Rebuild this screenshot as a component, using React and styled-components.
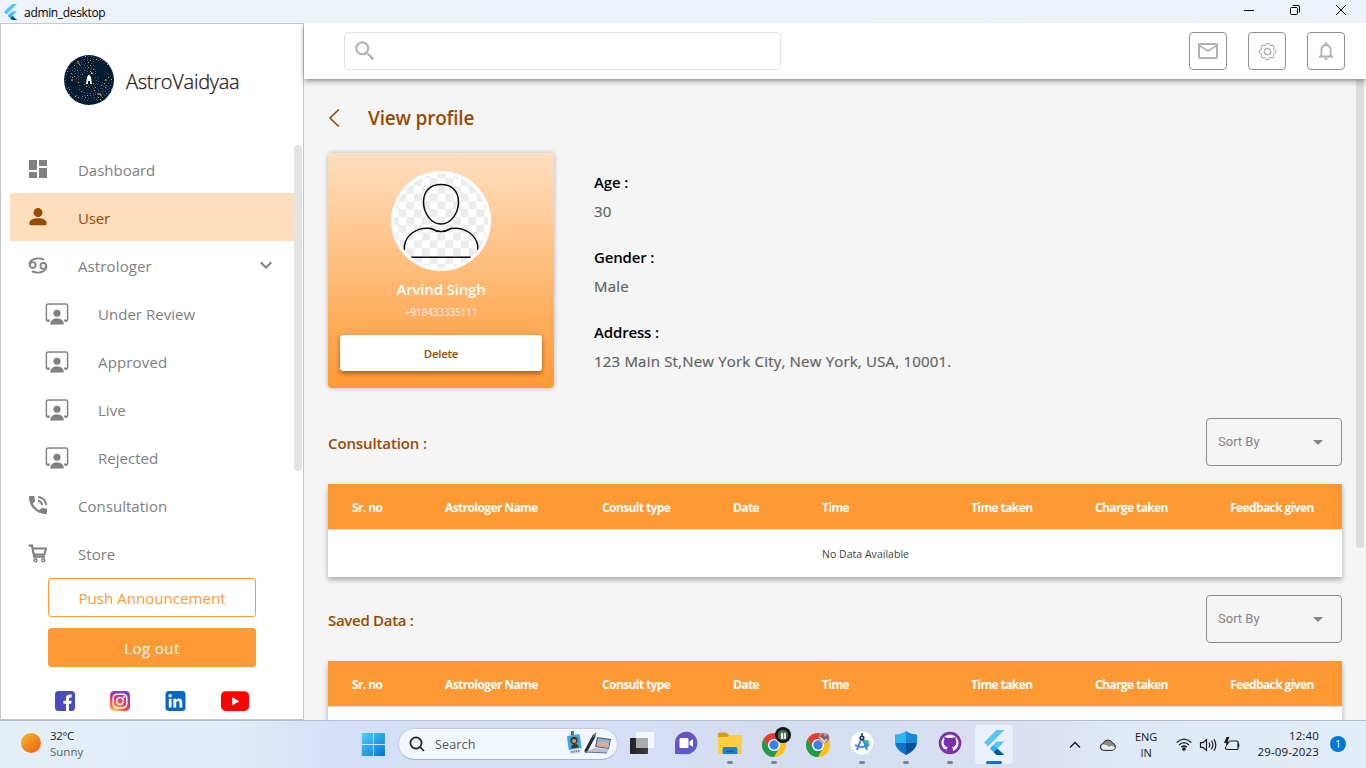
import React from "react";
import styled, { createGlobalStyle, css } from "styled-components";
import {
  MdDashboard,
  MdPhoneInTalk,
  MdMailOutline,
  MdNotificationsNone,
  MdSearch,
  MdKeyboardArrowDown,
  MdArrowDropDown,
} from "react-icons/md";

const GlobalStyle = createGlobalStyle`
  * { box-sizing: border-box; }
  body {
    margin: 0;
    overflow: hidden;
    font-family: "Open Sans", "Noto Sans", sans-serif;
    color: #000;
  }
  svg { display: block; flex: none; }
  button { font-family: inherit; padding: 0; margin: 0; }
`;

const brown = "#964b00";
const orange = "#ff9933";
const grey = "#808080";

const Desktop = styled.div`
  width: 1366px;
  height: 768px;
  display: flex;
  flex-direction: column;
  overflow: hidden;
`;

/* ---------- window ---------- */
const TitleBar = styled.header`
  height: 23px;
  flex: none;
  display: flex;
  align-items: center;
  padding-left: 4px;
  background: linear-gradient(90deg, #eef3fa, #edf3fa 60%, #eef2fb);
`;
const TitleText = styled.span`
  font-size: 12px;
  letter-spacing: -0.35px;
  margin-left: 7px;
  padding-top: 1px;
  flex: 1;
`;
const WindowControls = styled.div`
  display: flex;
  align-items: center;
  gap: 34px;
  padding: 0 19px 3px 0;
`;
const WindowBody = styled.div`
  height: 697px;
  flex: none;
  display: flex;
  overflow: hidden;
`;

/* ---------- sidebar ---------- */
const Sidebar = styled.aside`
  width: 304px;
  flex: none;
  border: 1px solid #c8c8c8;
  background: #fff;
  display: flex;
  flex-direction: column;
`;
const Brand = styled.div`
  height: 121px;
  flex: none;
  display: flex;
  align-items: flex-start;
  padding: 31px 0 0 63px;
`;
const BrandName = styled.div`
  font-size: 20px;
  font-weight: 300;
  line-height: 28px;
  letter-spacing: -0.25px;
  color: #1d1022;
  margin: 13px 0 0 12px;
  -webkit-text-stroke: 0.25px #1d1022;
`;
const MenuArea = styled.div`
  height: 433px;
  flex: none;
  display: flex;
  padding-left: 9px;
`;
const Menu = styled.nav`
  width: 284px;
`;
const SideThumb = styled.div`
  width: 8px;
  height: 326px;
  border-radius: 4px;
  background: #e4e4e4;
`;
const Item = styled.div`
  height: 48px;
  display: flex;
  align-items: center;
  padding-left: ${(p) => (p.$sub ? 34 : 15)}px;
  padding-right: 16px;
  background: ${(p) => (p.$active ? "#ffdebd" : "transparent")};
  color: ${(p) => (p.$active ? brown : grey)};
`;
const ItemIcon = styled.span`
  width: 26px;
  height: 26px;
  display: flex;
  align-items: center;
  justify-content: center;
  margin-right: ${(p) => (p.$sub ? 1 : 0)}px;
`;
const ItemLabel = styled.span`
  flex: 1;
  font-size: 15px;
  letter-spacing: ${(p) => p.$ls ?? 0.03}px;
  margin-left: 27px;
  padding-top: 1px;
`;
const SideButton = styled.button`
  height: 39px;
  width: 208px;
  margin: 0 0 11px 47px;
  border: 1px solid ${orange};
  border-radius: 3px;
  background: ${(p) => (p.$filled ? orange : "#fff")};
  color: ${(p) => (p.$filled ? "#fff" : orange)};
  font-size: 15px;
  letter-spacing: ${(p) => (p.$filled ? 0.4 : 0.05)}px;
  padding-top: 1px;
`;
const Social = styled.div`
  display: flex;
  align-items: center;
  padding: 12px 0 0 53px;
  gap: 33px;
`;

/* ---------- main ---------- */
const Main = styled.main`
  flex: 1;
  min-width: 0;
  display: flex;
  flex-direction: column;
  background: #f5f5f5;
`;
const TopBar = styled.div`
  height: 56px;
  flex: none;
  display: flex;
  align-items: center;
  padding: 0 21px 0 40px;
  background: #fff;
  box-shadow: 0 2px 4px -1px rgba(0, 0, 0, 0.3), 0 3px 6px rgba(0, 0, 0, 0.22);
  z-index: 1;
`;
const SearchBox = styled.div`
  width: 437px;
  height: 38px;
  border: 1px solid #e2e2e2;
  border-radius: 4px;
  display: flex;
  align-items: center;
  padding-left: 7px;
  color: #b3b3b3;
`;
const TopActions = styled.div`
  margin-left: auto;
  display: flex;
  gap: 21px;
`;
const IconButton = styled.button`
  width: 38px;
  height: 38px;
  border: 1px solid #8f8f8f;
  border-radius: 4px;
  background: #fff;
  color: #b0b0b0;
  display: flex;
  align-items: center;
  justify-content: center;
`;
const Scroller = styled.div`
  flex: 1;
  min-height: 0;
  display: flex;
  overflow: hidden;
`;
const Content = styled.div`
  width: 1038px;
  margin-right: 14px;
  padding: 24px 0 0 24px;
`;
const MainThumb = styled.div`
  width: 8px;
  height: 469px;
  border-radius: 4px;
  background: #dcdcdc;
`;
const PageHead = styled.div`
  display: flex;
  align-items: center;
  height: 30px;
  margin-bottom: 20px;
`;
const PageTitle = styled.h1`
  margin: 0 0 0 27px;
  font-size: 19px;
  font-weight: 600;
  letter-spacing: -0.2px;
  color: ${brown};
`;
const ProfileRow = styled.section`
  display: flex;
  height: 235px;
`;
const ProfileCard = styled.div`
  width: 226px;
  height: 235px;
  border-radius: 4px;
  background: linear-gradient(#ffdfc0, ${orange});
  box-shadow: 0 0 5px rgba(0, 0, 0, 0.28);
  display: flex;
  flex-direction: column;
  align-items: center;
  padding-top: 18px;
`;
const PersonName = styled.div`
  height: 22px;
  line-height: 22px;
  margin-top: 7px;
  font-size: 15px;
  font-weight: 600;
  letter-spacing: -0.18px;
  color: #fff;
`;
const Phone = styled.div`
  height: 16px;
  line-height: 16px;
  margin-top: 4px;
  font-size: 10.5px;
  font-weight: 600;
  letter-spacing: -0.42px;
  color: #eadfd5;
`;
const DeleteButton = styled.button`
  width: 202px;
  height: 36px;
  margin-top: 15px;
  border: 0;
  border-radius: 3px;
  background: #fff;
  color: ${brown};
  font-size: 11.5px;
  font-weight: 600;
  letter-spacing: -0.3px;
  box-shadow: 0 3px 4px rgba(90, 50, 10, 0.42), 0 1px 5px rgba(90, 50, 10, 0.2);
`;
const Facts = styled.dl`
  margin: 15px 0 0 40px;
  font-size: 15px;
`;
const FactName = styled.dt`
  height: 28px;
  line-height: 28px;
  font-weight: 600;
  letter-spacing: -0.15px;
`;
const FactValue = styled.dd`
  margin: 0 0 17px;
  height: 30px;
  line-height: 30px;
  letter-spacing: 0.2px;
  color: #5f5f5f;
  -webkit-text-stroke: 0.2px #5f5f5f;
`;
const SectionHead = styled.div`
  display: flex;
  align-items: center;
  justify-content: space-between;
  height: 48px;
  margin-top: ${(p) => p.$top}px;
  margin-bottom: 18px;
`;
const SectionTitle = styled.h2`
  margin: 0;
  padding-top: 2px;
  font-size: 15px;
  font-weight: 600;
  letter-spacing: ${(p) => p.$ls}px;
  color: ${brown};
`;
const SortSelect = styled.div`
  width: 136px;
  height: 48px;
  border: 1px solid #8c8c8c;
  border-radius: 4px;
  display: flex;
  align-items: center;
  justify-content: space-between;
  padding: 0 11px;
  font-family: Roboto, sans-serif;
  font-size: 13px;
  color: #858585;
`;
const SortLabel = styled.span`
  padding-bottom: 1px;
`;
const Table = styled.div`
  height: 93px;
  background: #fff;
  box-shadow: 0 3px 5px rgba(0, 0, 0, 0.3);
`;
const HeadRow = styled.div`
  height: 46px;
  background: ${orange};
  border-bottom: 1px solid #e4dcd4;
  display: grid;
  grid-template-columns: 93px 157px 131px 89px 149px 124px 135px 1fr;
  align-items: center;
  padding-left: 24px;
  padding-top: 2px;
`;
const HeadCell = styled.span`
  color: #fff;
  font-size: 12px;
  font-weight: 700;
  letter-spacing: -0.6px;
  white-space: nowrap;
`;
const EmptyRow = styled.div`
  height: 47px;
  line-height: 48px;
  padding-left: 494px;
  font-size: 10.5px;
  letter-spacing: 0.03px;
  color: #404040;
`;

/* ---------- taskbar ---------- */
const Taskbar = styled.footer`
  height: 48px;
  flex: none;
  display: flex;
  align-items: center;
  border-top: 1px solid #b5bdcd;
  background: linear-gradient(90deg, #e3eef7 0, #e2edf8 230px, #d4e0f8 340px, #d5dff6 620px, #d5dcef 760px, #d6dff2 900px, #dddff2 1040px, #dfe9f7 1110px, #e1edf8 100%);
`;
const Weather = styled.div`
  width: 352px;
  display: flex;
  align-items: center;
  padding: 0 0 2px 21px;
`;
const Sun = styled.span`
  width: 20px;
  height: 20px;
  border-radius: 50%;
  background: linear-gradient(140deg, #efb52c 10%, #f0680c 85%);
  margin-top: -1px;
`;
const WeatherText = styled.div`
  margin-left: 9px;
  font-size: 11.5px;
  line-height: 16px;
  letter-spacing: -0.35px;
  color: #1c1c1c;
`;
const WeatherNote = styled.div`
  color: #5b6168;
  letter-spacing: 0;
`;
const StartSlot = styled.div`
  width: 46px;
  padding: 0 0 1px 9px;
`;
const TaskSearch = styled.div`
  width: 220px;
  height: 32px;
  border-radius: 16px;
  border: 1px solid #c3cde0;
  border-bottom-color: #a9b3c8;
  background: #f2f6fd;
  display: flex;
  align-items: center;
  padding: 0 5px 0 10px;
  margin-bottom: 1px;
`;
const TaskSearchText = styled.span`
  flex: 1;
  margin-left: 10px;
  font-size: 12.5px;
  letter-spacing: 0.15px;
  color: #52565c;
`;
const Apps = styled.div`
  display: flex;
  margin-left: 5px;
`;
const AppSlot = styled.div`
  width: 38px;
  height: 39px;
  margin-right: 6px;
  border-radius: 4px;
  display: flex;
  flex-direction: column;
  align-items: center;
  justify-content: space-between;
  padding-top: 5px;
  ${(p) => p.$active && css`
    background: #ebf1fb;
    box-shadow: 0 0 0 0.5px #d9e0ee;
  `}
`;
const Indicator = styled.span`
  width: ${(p) => (p.$active ? 16 : 6)}px;
  height: 3px;
  border-radius: 2px;
  background: ${(p) => (p.$active ? "#0a74d4" : p.$on ? "#80848c" : "transparent")};
`;
const Tray = styled.div`
  margin-left: auto;
  display: flex;
  align-items: center;
  padding-right: 20px;
  font-size: 11.5px;
  line-height: 16px;
  color: #151515;
`;
const TrayArrow = styled.span`
  margin-right: 18px;
`;
const Language = styled.div`
  width: 26px;
  text-align: center;
  margin: 0 17px 0 16px;
  font-size: 11px;
  letter-spacing: -0.1px;
`;
const Clock = styled.div`
  width: 66px;
  text-align: right;
  margin: -1px 11px 0 13px;
  letter-spacing: 0.15px;
  white-space: nowrap;
`;
const Badge = styled.span`
  width: 16px;
  height: 16px;
  border-radius: 50%;
  background: #0078d7;
  color: #fff;
  font-size: 10px;
  text-align: center;
  margin-bottom: 1px;
`;

/* ---------- drawings ---------- */
const FlutterMark = ({ size }) => (
  <svg width={size * 0.82} height={size} viewBox="0 0 82 100">
    <path d="M50 0H81L16 65L0 50Z" fill="#54c5f8" />
    <path d="M50 46H81L53 74L81 100H50L24 74Z" fill="#54c5f8" />
    <path d="M39 88L53 74L81 100H50Z" fill="#01579b" />
    <path d="M24 74L38 60L53 74L39 88Z" fill="#29b6f6" />
  </svg>
);

const dots = [];
for (let r = 5; r <= 24; r += 2.1) {
  const n = Math.round(r * 2.1);
  for (let i = 0; i < n; i++) {
    const a = (i / n) * Math.PI * 2 + r * 0.7;
    const seed = (i * 37 + Math.round(r * 10) * 13) % 17;
    if (seed % 3 === 1) continue;
    dots.push({
      x: 25 + Math.cos(a) * r,
      y: 25 + Math.sin(a) * r,
      c: seed === 5 || seed === 12 ? "#f09a3a" : seed % 2 ? "#4a6880" : "#2a4d68",
    });
  }
}
const BrandLogo = () => (
  <svg width="50" height="50" viewBox="0 0 50 50">
    <circle cx="25" cy="25" r="25" fill="#041c30" />
    {dots.map((d, i) => (
      <rect key={i} x={Math.round(d.x)} y={Math.round(d.y)} width="1" height="1" fill={d.c} />
    ))}
    <path d="M7 25h2M13 6l3 4M26 16l3 3M42 24v2M33 39h4v2" stroke="#ff9f3a" fill="none" />
    <path d="M22 29L23 22L25 19.5L27 22L28 29H26V26H24V29Z" fill="#fff" />
  </svg>
);

const PersonIcon = () => (
  <svg width="18" height="18" viewBox="0 0 18 18" fill="currentColor">
    <circle cx="9" cy="4.6" r="4.5" />
    <path d="M.4 15.2C.4 12.2 4.2 10.3 9 10.3S17.6 12.2 17.6 15.2V16Q17.6 17.2 16.4 17.2H1.6Q.4 17.2 .4 16Z" />
  </svg>
);

const CancerIcon = () => (
  <svg width="20" height="17" viewBox="0 0 20 17" fill="none" stroke="currentColor" strokeWidth="1.8">
    <circle cx="4.7" cy="8.1" r="2.9" />
    <circle cx="15.3" cy="8.9" r="2.9" />
    <path d="M1.4 7.7C1.6 2.6 8.5 -.3 16 2.6" />
    <path d="M18.6 9.3C18.4 14.4 11.5 17.3 4 14.4" />
  </svg>
);

const WorkspaceIcon = () => (
  <svg width="24" height="24" viewBox="0 -2 24 24">
    <path d="M4.3 18H3Q1.4 18 1.4 16.4V2.6Q1.4 1 3 1H21Q22.6 1 22.6 2.6V16.4Q22.6 18 21 18H19.7" fill="none" stroke="currentColor" strokeWidth="1.4" />
    <path d="M1.5 16.5H5L4 19H2.5ZM22.5 16.5H19L20 19H21.5Z" fill="currentColor" />
    <circle cx="12" cy="10.2" r="3.5" fill="currentColor" />
    <path d="M5.2 21.4C5.4 17.5 8 15.6 12 15.6S18.6 17.5 18.8 21.4Z" fill="currentColor" />
  </svg>
);

const CartIcon = () => (
  <svg width="20" height="19" viewBox="0 0 20 19" fill="none" stroke="currentColor">
    <path d="M.5 1.7H4L6.2 12.6H17" strokeWidth="2.2" />
    <path d="M4.8 4.6H18L16.3 10.6H6" strokeWidth="2" />
    <circle cx="7.5" cy="16.2" r="1.5" strokeWidth="1.4" />
    <circle cx="15.3" cy="16.2" r="1.5" strokeWidth="1.4" />
  </svg>
);

const gearPath = (() => {
  const pts = [];
  for (let i = 0; i <= 96; i++) {
    const a = (i / 96) * Math.PI * 2;
    const r = 7.4 + Math.max(-0.75, Math.min(0.8, 1.3 * Math.cos(8 * a)));
    pts.push(`${(9.5 + r * Math.sin(a)).toFixed(2)} ${(9.5 - r * Math.cos(a)).toFixed(2)}`);
  }
  return `M${pts.join("L")}Z`;
})();
const GearIcon = () => (
  <svg width="19" height="19" viewBox="0 0 19 19" fill="none" stroke="currentColor" strokeWidth="1.1" strokeLinejoin="round">
    <path d={gearPath} />
    <circle cx="9.5" cy="9.5" r="3.2" strokeWidth="1.3" />
  </svg>
);

const BackIcon = () => (
  <svg width="13" height="20" viewBox="0 0 13 20" fill="none" stroke={brown} strokeWidth="1.6">
    <path d="M10.8 1.5L2 10L10.8 18.5" />
  </svg>
);

const Avatar = () => (
  <svg width="100" height="100" viewBox="0 0 100 100">
    <defs>
      <pattern id="checks" width="15.6" height="15.6" patternUnits="userSpaceOnUse" x="7.5" y="7">
        <rect width="15.6" height="15.6" fill="#fff" />
        <rect width="7.8" height="7.8" fill="#ececec" />
        <rect x="7.8" y="7.8" width="7.8" height="7.8" fill="#ececec" />
      </pattern>
      <clipPath id="round"><circle cx="50" cy="50" r="47" /></clipPath>
    </defs>
    <circle cx="50" cy="50" r="50" fill="#fff" />
    <g clipPath="url(#round)">
      <rect width="100" height="100" fill="url(#checks)" />
      <g fill="none" stroke="#0c0c0c" strokeWidth="1.5">
        <path d="M50 13.6C61 13.6 67.5 20 67.5 31C67.5 42 60 53 50 53S32.5 42 32.5 31C32.5 20 39 13.6 50 13.6Z" />
        <path d="M13.4 79V75C14.5 65 25 55.5 40 57.5Q50 63.5 60 57.5C75 55.5 85.5 65 86.8 75V79" />
        <path d="M20 86.3H80" />
      </g>
    </g>
  </svg>
);

const FacebookIcon = () => (
  <svg width="22" height="22" viewBox="0 0 22 22">
    <rect x="1" y="1" width="20" height="20" rx="3.5" fill="#4b4dbd" />
    <path d="M12 21V13.8H9.4V10.7H12V8.6C12 5.8 13.6 4.6 15.8 4.6H17.7V7.4H16.4C15.3 7.4 15 8 15 8.9V10.7H17.6L17.2 13.8H15V21Z" fill="#fff" />
  </svg>
);
const InstagramIcon = () => (
  <svg width="22" height="22" viewBox="0 0 22 22">
    <defs>
      <radialGradient id="ig" cx=".25" cy="1" r="1.1">
        <stop offset="0" stopColor="#ffd65a" />
        <stop offset=".35" stopColor="#fb6a3a" />
        <stop offset=".65" stopColor="#d6307e" />
        <stop offset="1" stopColor="#7040cf" />
      </radialGradient>
    </defs>
    <rect x="1" y="1" width="20" height="20" rx="4.5" fill="url(#ig)" />
    <rect x="4.2" y="4.2" width="13.6" height="13.6" rx="4" fill="none" stroke="#fff" strokeWidth="1.5" />
    <circle cx="11" cy="11" r="3.4" fill="none" stroke="#fff" strokeWidth="1.5" />
    <circle cx="15" cy="7" r="1" fill="#fff" />
  </svg>
);
const LinkedInIcon = () => (
  <svg width="23" height="22" viewBox="-.5 0 23 22">
    <rect x="1" y="1" width="20" height="20" rx="3.5" fill="#0a66c2" />
    <circle cx="5.7" cy="5.7" r="1.7" fill="#fff" />
    <path d="M4.3 8.7H7.1V17.6H4.3ZM8.9 8.7H11.5V10C12 9 13 8.4 14.4 8.4C17 8.4 17.8 10 17.8 12.6V17.6H15V13.1C15 11.8 14.8 10.9 13.6 10.9C12.2 10.9 11.7 11.8 11.7 13.1V17.6H8.9Z" fill="#fff" />
  </svg>
);
const YouTubeIcon = () => (
  <svg width="30" height="22" viewBox="0 0 30 22">
    <rect x="1" y="1.3" width="28" height="19.6" rx="4.5" fill="#f00" />
    <path d="M12.2 7V15.4L19.3 11.2Z" fill="#fff" />
  </svg>
);

const StartIcon = () => (
  <svg width="24" height="24" viewBox="0 0 24 24">
    <defs>
      <linearGradient id="win" x1="0" y1="0" x2="1" y2="1">
        <stop offset="0" stopColor="#4fd0fb" />
        <stop offset="1" stopColor="#0373d1" />
      </linearGradient>
    </defs>
    <path d="M.8 1H11.9V12H.8ZM12.8 1H23.9V12H12.8ZM.8 13H11.9V24H.8ZM12.8 13H23.9V24H12.8Z" fill="url(#win)" />
  </svg>
);
const SearchGlass = () => (
  <svg width="16" height="16" viewBox="0 0 16 16" fill="none" stroke="#222" strokeWidth="1.7">
    <circle cx="7" cy="7" r="5.6" />
    <path d="M11 11L15 15" />
  </svg>
);
const SearchArt = () => (
  <svg width="46" height="26" viewBox="0 0 46 26">
    <path d="M5 0H8V5H5Z" fill="#56707f" />
    <g transform="rotate(-8 8 13)">
      <rect x="2" y="4" width="13" height="15" rx="1.5" fill="#36a9e2" />
      <rect x="2" y="18" width="13" height="5" rx="1" fill="#dfe3ea" />
      <path d="M4 20.5H13" stroke="#777f8c" strokeWidth="2" strokeDasharray="1.5 .8" />
      <circle cx="8.5" cy="9.5" r="3.6" fill="#49301f" />
      <circle cx="8.5" cy="10" r="2" fill="#d69d76" />
      <path d="M4.5 17Q5 13 8.5 13T12.5 17Z" fill="#493323" />
    </g>
    <path d="M20 20L28 5" stroke="#252b33" strokeWidth="3.2" strokeLinecap="round" />
    <path d="M27 6L30 2" stroke="#6b7480" strokeWidth="1.6" />
    <path d="M31 6L45 8L43 18L29 16Z" fill="#596273" />
    <path d="M32 7.2L43.8 8.9L42.3 16.7L30.5 15Z" fill="#8cb6dc" />
    <path d="M31.3 11Q36 9 42.9 13L42.3 16.7L30.5 15Z" fill="#dfab96" />
    <path d="M29 17L43 18L41 22L19 21Z" fill="#bcc2cf" />
    <path d="M19 21L41 22" stroke="#697184" />
  </svg>
);
const TaskViewIcon = () => (
  <svg width="26" height="26" viewBox="0 0 26 26">
    <defs>
      <linearGradient id="tv"><stop stopColor="#222" /><stop offset="1" stopColor="#3c3c3c" /></linearGradient>
    </defs>
    <rect x="1" y="8" width="18" height="16" rx="1" fill="url(#tv)" />
    <rect x="7" y="2" width="18" height="16" rx="1" fill="#f5f6f8" />
    <path d="M7 8H19V18H7Z" fill="#a9abae" />
  </svg>
);
const ChatIcon = () => (
  <svg width="26" height="26" viewBox="0 0 26 26">
    <defs>
      <linearGradient id="chat" x1="0" y1="0" x2="1" y2="1">
        <stop offset="0" stopColor="#7b4bb4" />
        <stop offset="1" stopColor="#4f61d0" />
      </linearGradient>
    </defs>
    <path d="M2 24V12A11.2 11.2 0 1 1 13 24.2Z" fill="url(#chat)" />
    <rect x="6.5" y="8" width="9" height="10" rx="1.5" fill="#fff" />
    <path d="M16.5 11.5L20 9V17L16.5 14.5Z" fill="#fff" />
  </svg>
);
const FolderIcon = () => (
  <svg width="26" height="26" viewBox="0 0 26 26">
    <path d="M1 4Q1 2.5 2.5 2.5H9L12 5H24Q25 5 25 6V12H1Z" fill="#d99a14" />
    <path d="M1 7H10L12 5H24Q25 5 25 6V23Q25 24 24 24H2Q1 24 1 23Z" fill="#fcce46" />
    <path d="M5.5 24V19Q5.5 17 7.5 17H18.5Q20.5 17 20.5 19V24Z" fill="#1685d2" />
    <path d="M9 21.5H17" stroke="#0b5da8" strokeWidth="1.5" />
  </svg>
);
const ChromeIcon = ({ photo }) => (
  <svg width="32" height="30" viewBox="0 0 32 30" overflow="visible">
    <g transform="translate(0 2)">
      <circle cx="16" cy="13" r="12" fill="#fbc116" />
      <path d="M5.6 7A12 12 0 0 1 26.4 7H16A6 6 0 0 0 10.8 16Z" fill="#e33b2e" />
      <path d="M5.6 7A12 12 0 0 0 16 25L21.2 16A6 6 0 0 1 10.8 16Z" fill="#229a4c" />
      <circle cx="16" cy="13" r="6" fill="#fff" />
      <circle cx="16" cy="13" r="4.7" fill="#3b80ee" />
    </g>
    {photo ? (
      <g>
        <circle cx="22" cy="8" r="5.5" fill="#c79a94" />
        <path d="M18 6L21 3L23 7L26 4L27 9L24 12Z" fill="#7b6172" />
        <path d="M19 8L22 12L25 9" stroke="#edd6cc" strokeWidth="1.5" fill="none" />
      </g>
    ) : (
      <g>
        <circle cx="25" cy="5" r="8" fill="#101515" />
        <circle cx="25" cy="5" r="5.3" fill="#43644c" />
        <path d="M22.8 9V4L24 1.8L25 4V9ZM25.7 9V4L27 2L28 4V9Z" fill="#e8ece9" />
      </g>
    )}
  </svg>
);
const StudioIcon = () => (
  <svg width="26" height="26" viewBox="0 0 26 26">
    <circle cx="13" cy="13" r="11.5" fill="#fff" />
    <path d="M15 10L19 10Q22 14 19 17H16Z" fill="#34c77b" />
    <path d="M13 7L8 20M13 7L18 20M6 15Q13 19 20 15" stroke="#3b7ded" strokeWidth="2" fill="none" />
    <circle cx="13" cy="8" r="2.6" fill="#1d3650" />
    <circle cx="13" cy="8" r="1" fill="#d4e4fb" />
    <path d="M13 3V6" stroke="#1d3650" strokeWidth="1.5" />
  </svg>
);
const ShieldIcon = () => (
  <svg width="26" height="26" viewBox="0 0 26 26">
    <path d="M13 1Q18 4.5 24 4.5V12Q24 20 13 25V1Z" fill="#1686d9" />
    <path d="M13 1Q8 4.5 2 4.5V12Q2 20 13 25V1Z" fill="#2fb4ec" />
    <path d="M2.2 13H13V25Q3.5 20 2.2 13Z" fill="#1272c8" />
    <path d="M23.8 13H13V25Q22.5 20 23.8 13Z" fill="#09509b" />
  </svg>
);
const GithubIcon = () => (
  <svg width="26" height="26" viewBox="0 0 26 26">
    <circle cx="13" cy="13" r="11.3" fill="#7a30ac" />
    <circle cx="13" cy="13" r="8.6" fill="#fff" />
    <path d="M7.4 7Q9 7 10.4 8Q13 7.3 15.6 8Q17 7 18.6 7Q19 8.5 18.6 9.8Q19.8 11.3 19.3 13.5Q18.6 16.7 15 17Q16 18 16 20V22H10V20.3Q7.5 20.8 6.6 18.5Q8.7 20 10.1 18.5Q10.2 17.5 11 17Q7.4 16.7 6.7 13.5Q6.2 11.3 7.4 9.8Q7 8.5 7.4 7Z" fill="#7a30ac" />
  </svg>
);
const CloudIcon = () => (
  <svg width="18" height="14" viewBox="0 0 18 14">
    <path d="M4.5 12.4A3.5 3.5 0 0 1 4 5.5A5.2 5.2 0 0 1 13.6 5A3.8 3.8 0 0 1 13.4 12.4Z" fill="#888" stroke="#2b2b2b" />
    <path d="M5 11.8A3 3 0 0 1 3.5 6.5Q8 6 10 9Q13 6.5 16 9.5Q15.5 11.8 13.4 11.8Z" fill="#eceff3" />
  </svg>
);
const StatusIcons = () => (
  <svg width="64" height="18" viewBox="0 0 64 18" fill="none" stroke="#1a1a1a" strokeWidth="1.2">
    <path d="M.6 6.5Q8 -.3 15.4 6.5M3 9Q8 4.2 13 9M5.2 11.3Q8 8.7 10.8 11.3" />
    <circle cx="8" cy="13" r="1.2" fill="#1a1a1a" />
    <path d="M24.5 6.7H27L30.5 3.5V14.5L27 11.3H24.5ZM33 6.5Q34.6 9 33 11.5M35.5 4.8Q38.2 9 35.5 13.2M38 3.2Q41.6 9 38 14.8" />
    <path d="M53.5 5H61Q62 5 62 6V12.5Q62 13.5 61 13.5H51Q49.5 13.5 49.5 12V11M62.7 7.5V11" />
    <path d="M50.5 1L48 7H50.5L49.5 11.5L54 5.5H51.5L53.5 1Z" fill="#1a1a1a" stroke="none" />
  </svg>
);

const menuItems = [
  { label: "Dashboard", icon: <MdDashboard size={24} />, ls: -0.02 },
  { label: "User", icon: <PersonIcon />, active: true, ls: -0.2 },
  { label: "Astrologer", icon: <CancerIcon />, open: true, ls: 0.12 },
  { label: "Under Review", icon: <WorkspaceIcon />, sub: true },
  { label: "Approved", icon: <WorkspaceIcon />, sub: true, ls: 0.15 },
  { label: "Live", icon: <WorkspaceIcon />, sub: true },
  { label: "Rejected", icon: <WorkspaceIcon />, sub: true },
  { label: "Consultation", icon: <MdPhoneInTalk size={24} /> },
  { label: "Store", icon: <CartIcon /> },
];

const facts = [
  { name: "Age :", value: "30" },
  { name: "Gender :", value: "Male" },
  { name: "Address :", value: "123 Main St,New York City, New York, USA, 10001." },
];

const columns = ["Sr. no", "Astrologer Name", "Consult type", "Date", "Time", "Time taken", "Charge taken", "Feedback given"];

const apps = [
  { icon: <TaskViewIcon /> },
  { icon: <ChatIcon /> },
  { icon: <FolderIcon />, on: true },
  { icon: <ChromeIcon />, on: true },
  { icon: <ChromeIcon photo /> },
  { icon: <StudioIcon />, on: true },
  { icon: <ShieldIcon />, on: true },
  { icon: <GithubIcon />, on: true },
  { icon: <FlutterMark size={25} />, on: true, active: true },
];

const DataSection = ({ title, top, ls, emptyText }) => (
  <section>
    <SectionHead $top={top}>
      <SectionTitle $ls={ls}>{title}</SectionTitle>
      <SortSelect>
        <SortLabel>Sort By</SortLabel>
        <MdArrowDropDown size={24} />
      </SortSelect>
    </SectionHead>
    <Table>
      <HeadRow>
        {columns.map((c) => (
          <HeadCell key={c}>{c}</HeadCell>
        ))}
      </HeadRow>
      {emptyText && <EmptyRow>{emptyText}</EmptyRow>}
    </Table>
  </section>
);

export default function App() {
  return (
    <Desktop>
      <GlobalStyle />
      <TitleBar>
        <FlutterMark size={16} />
        <TitleText>admin_desktop</TitleText>
        <WindowControls>
          <svg width="12" height="12" viewBox="0 0 12 12"><path d="M1 6.5H11" stroke="#000" /></svg>
          <svg width="12" height="12" viewBox="0 0 12 12" fill="none" stroke="#000">
            <rect x="1.5" y="3.5" width="7" height="7" rx="1" />
            <path d="M3.5 1.5H9Q10.5 1.5 10.5 3V8.5" />
          </svg>
          <svg width="12" height="12" viewBox="0 0 12 12" stroke="#000"><path d="M1 1L11 11M11 1L1 11" /></svg>
        </WindowControls>
      </TitleBar>
      <WindowBody>
        <Sidebar>
          <Brand>
            <BrandLogo />
            <BrandName>AstroVaidyaa</BrandName>
          </Brand>
          <MenuArea>
            <Menu>
              {menuItems.map((m) => (
                <Item key={m.label} $active={m.active} $sub={m.sub}>
                  <ItemIcon $sub={m.sub}>{m.icon}</ItemIcon>
                  <ItemLabel $ls={m.ls}>{m.label}</ItemLabel>
                  {m.open && <MdKeyboardArrowDown size={24} />}
                </Item>
              ))}
            </Menu>
            <SideThumb />
          </MenuArea>
          <SideButton>Push Announcement</SideButton>
          <SideButton $filled>Log out</SideButton>
          <Social>
            <FacebookIcon />
            <InstagramIcon />
            <LinkedInIcon />
            <YouTubeIcon />
          </Social>
        </Sidebar>
        <Main>
          <TopBar>
            <SearchBox>
              <MdSearch size={26} />
            </SearchBox>
            <TopActions>
              <IconButton><MdMailOutline size={24} /></IconButton>
              <IconButton><GearIcon /></IconButton>
              <IconButton><MdNotificationsNone size={22} /></IconButton>
            </TopActions>
          </TopBar>
          <Scroller>
            <Content>
              <PageHead>
                <BackIcon />
                <PageTitle>View profile</PageTitle>
              </PageHead>
              <ProfileRow>
                <ProfileCard>
                  <Avatar />
                  <PersonName>Arvind Singh</PersonName>
                  <Phone>+918433335111</Phone>
                  <DeleteButton>Delete</DeleteButton>
                </ProfileCard>
                <Facts>
                  {facts.map((f) => (
                    <React.Fragment key={f.name}>
                      <FactName>{f.name}</FactName>
                      <FactValue>{f.value}</FactValue>
                    </React.Fragment>
                  ))}
                </Facts>
              </ProfileRow>
              <DataSection title="Consultation :" top={30} ls={-0.12} emptyText="No Data Available" />
              <DataSection title="Saved Data :" top={18} ls={-0.3} />
            </Content>
            <MainThumb />
          </Scroller>
        </Main>
      </WindowBody>
      <Taskbar>
        <Weather>
          <Sun />
          <WeatherText>
            32°C
            <WeatherNote>Sunny</WeatherNote>
          </WeatherText>
        </Weather>
        <StartSlot><StartIcon /></StartSlot>
        <TaskSearch>
          <SearchGlass />
          <TaskSearchText>Search</TaskSearchText>
          <SearchArt />
        </TaskSearch>
        <Apps>
          {apps.map((a, i) => (
            <AppSlot key={i} $active={a.active}>
              {a.icon}
              <Indicator $on={a.on} $active={a.active} />
            </AppSlot>
          ))}
        </Apps>
        <Tray>
          <TrayArrow>
            <svg width="12" height="8" viewBox="0 0 12 8" fill="none" stroke="#1a1a1a" strokeWidth="1.4"><path d="M1 6.5L6 1.5L11 6.5" /></svg>
          </TrayArrow>
          <CloudIcon />
          <Language>ENG IN</Language>
          <StatusIcons />
          <Clock>
            12:40
            <br />
            29-09-2023
          </Clock>
          <Badge>1</Badge>
        </Tray>
      </Taskbar>
    </Desktop>
  );
}
